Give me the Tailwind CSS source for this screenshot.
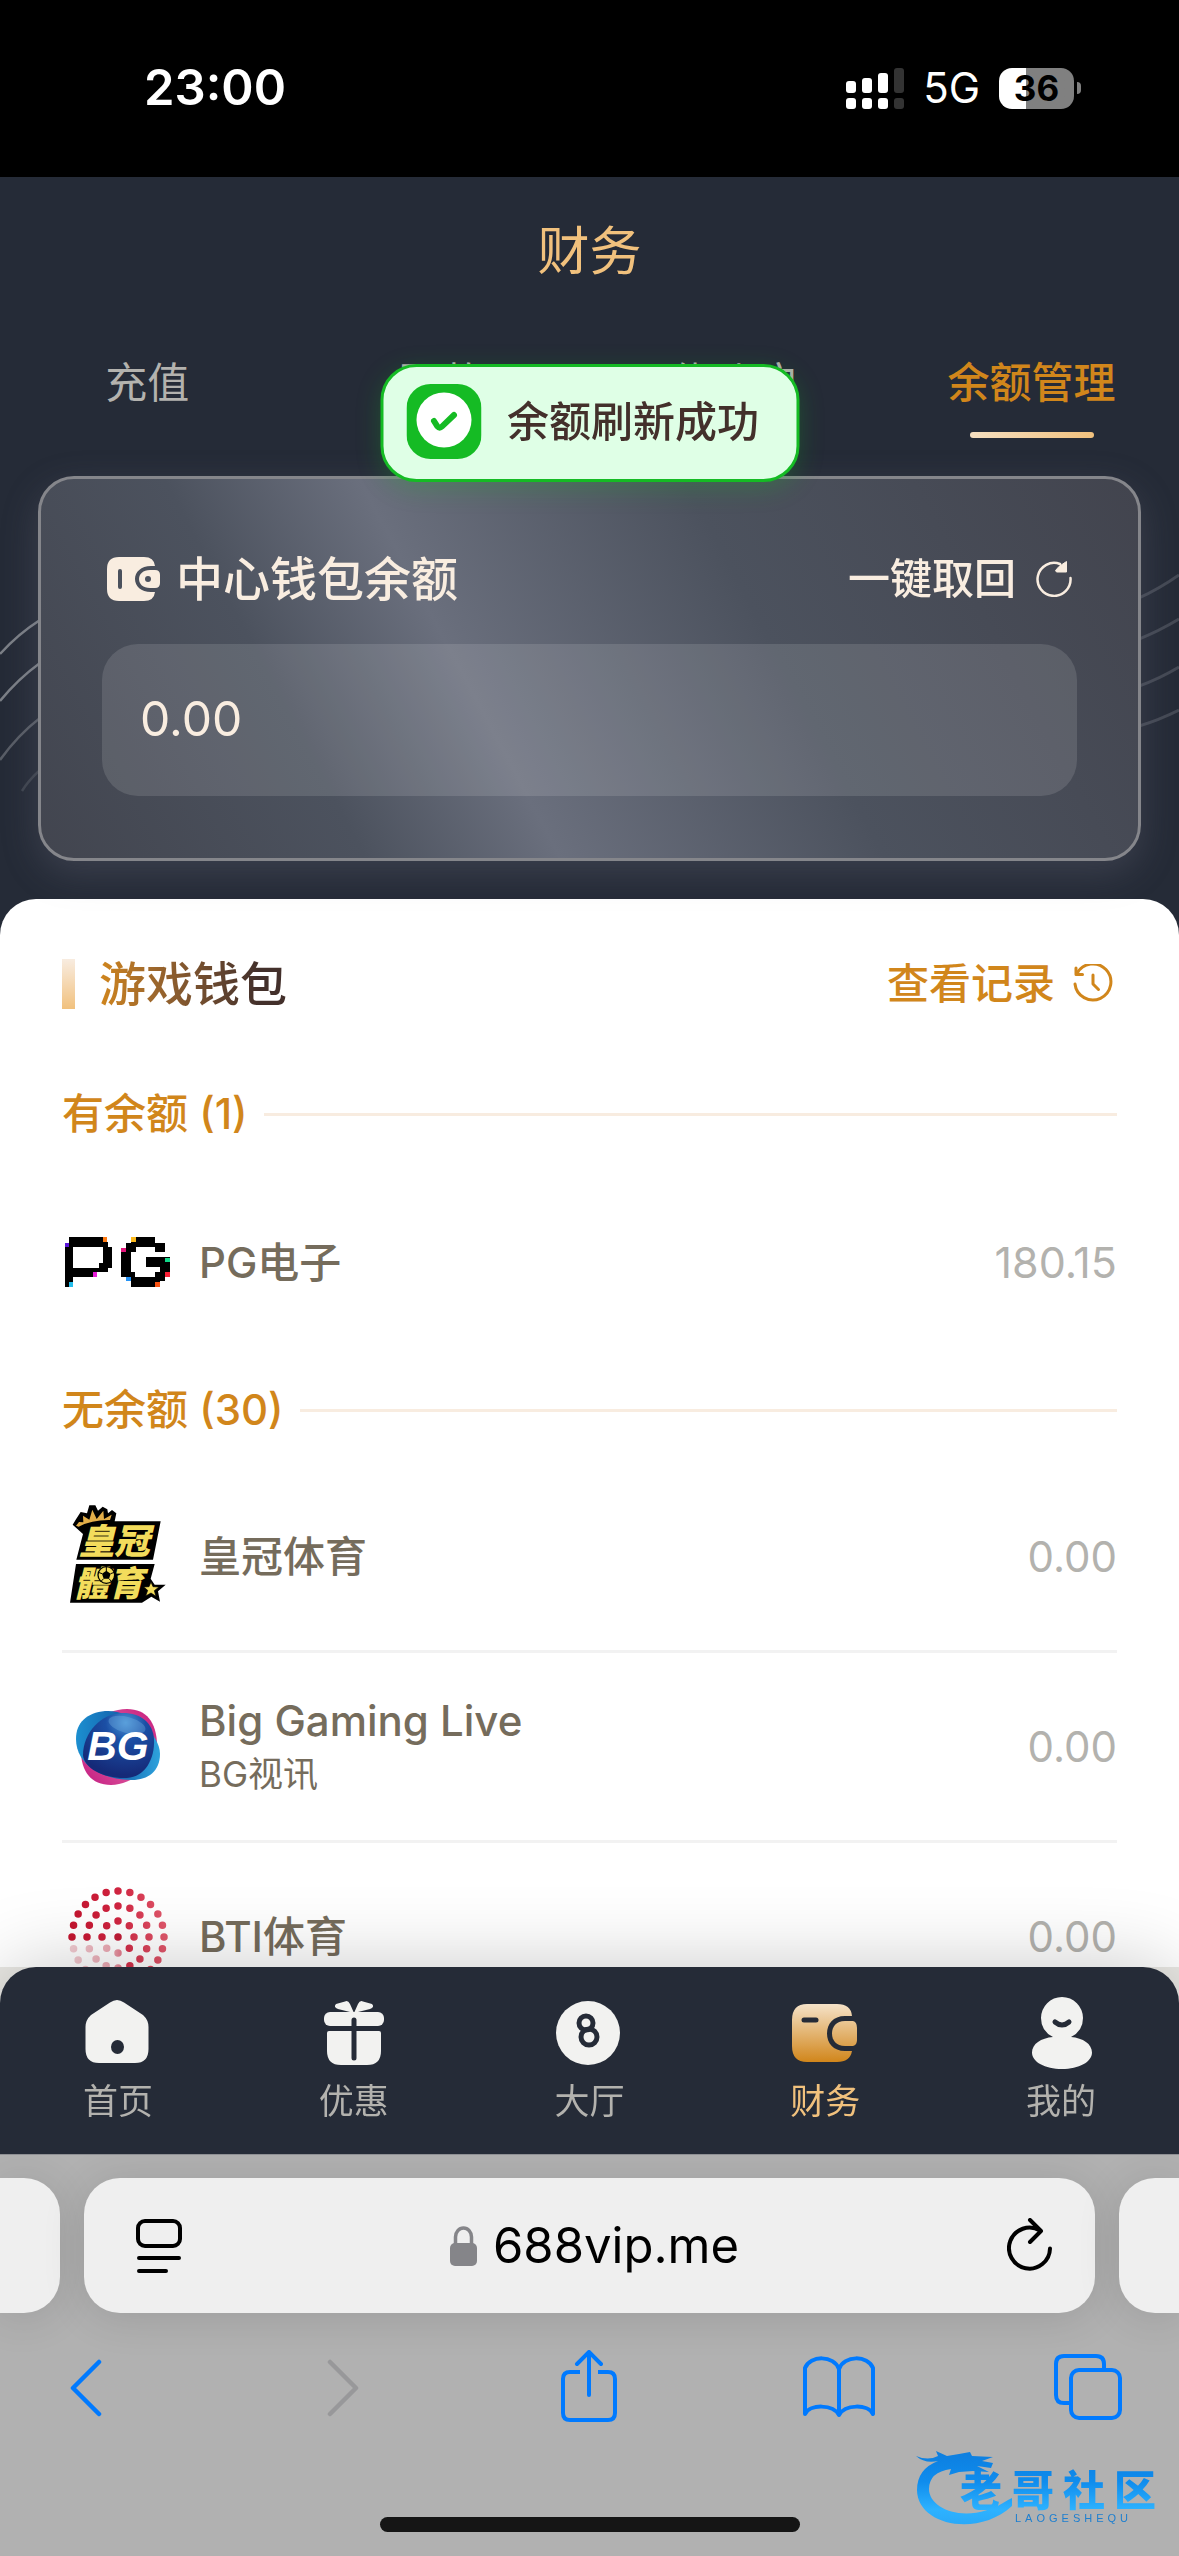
<!DOCTYPE html>
<html lang="zh-CN">
<head>
<meta charset="utf-8">
<meta name="viewport" content="width=device-width, initial-scale=1">
<title>财务</title>
<script src="https://cdn.jsdelivr.net/npm/@tailwindcss/browser@4"></script>
</head>
<body class="flex h-screen flex-col overflow-hidden bg-[#252b37] font-['Inter','Noto_Sans_CJK_SC',sans-serif]">

<!-- Status bar -->
<div class="flex h-[177px] shrink-0 items-start justify-between bg-black pt-[58px] pr-[98px] pl-36 text-white">
  <time class="text-[49px] leading-[60px] font-semibold">23:00</time>
  <div class="flex h-[60px] items-center gap-[19px]">
    <svg class="h-[41px] w-[58px]" viewBox="0 0 58 41" fill="#fff" aria-hidden="true">
      <rect x="0" y="13" width="10" height="12" rx="3"/><rect x="16" y="10" width="10" height="15" rx="3"/><rect x="32" y="5" width="10" height="20" rx="3"/><rect x="48" y="0" width="10" height="25" rx="3" fill="#333"/>
      <rect x="0" y="30" width="10" height="11" rx="3"/><rect x="16" y="30" width="10" height="11" rx="3"/><rect x="32" y="30" width="10" height="11" rx="3"/><rect x="48" y="30" width="10" height="11" rx="3" fill="#333"/>
    </svg>
    <span class="text-[42px] leading-[60px]">5G</span>
    <div class="flex items-center gap-[3px]">
      <span class="flex h-[41px] w-[75px] items-center justify-center rounded-[13px] bg-linear-to-r from-white from-36% to-[#808080] to-36% text-[35px] font-bold text-black">36</span>
      <span class="h-3 w-1 rounded-r-full bg-[#808080]"></span>
    </div>
  </div>
</div>

<!-- Page header, tabs and wallet card -->
<header class="relative shrink-0 pb-[38px]">
  <svg class="absolute top-[390px] left-0 h-[230px] w-10" viewBox="0 0 40 230" fill="none" stroke="#7b7f86" stroke-width="2.500" aria-hidden="true">
    <path d="M0 87Q18 67 40 53"/><path d="M0 134Q18 112 40 96"/><path d="M0 193Q18 168 40 151" opacity=".6"/><path d="M22 224Q28 214 40 203" opacity=".3"/>
  </svg>
  <svg class="absolute top-[390px] right-0 h-[230px] w-10" viewBox="0 0 40 230" fill="none" stroke="#444954" stroke-width="3" aria-hidden="true">
    <path d="M0 31Q20 22 40 8"/><path d="M0 72Q20 64 40 52"/><path d="M0 119Q20 112 40 100"/><path d="M0 159Q20 153 40 143"/>
  </svg>
  <h1 class="text-center text-[52px] leading-[150px] text-[#f1c17d]">财务</h1>
  <nav class="grid grid-cols-4 text-[42px] leading-[60px] text-[#b3b2ae]" aria-label="财务分类">
    <a href="#" class="flex h-[111px] flex-col items-center pt-[26px]">充值</a>
    <a href="#" class="flex h-[111px] flex-col items-center pt-[26px]">取款</a>
    <a href="#" class="flex h-[111px] flex-col items-center pt-[26px]">绑账户</a>
    <a href="#" class="flex h-[111px] flex-col items-center justify-between pt-[26px] font-medium text-[#d1861b]" aria-current="page">余额管理<span class="h-1.5 w-[124px] rounded-full bg-linear-to-r from-[#f5dfc0] to-[#f1c17d]"></span></a>
  </nav>

  <section class="relative mx-[38px] mt-[38px] rounded-[36px] border-3 border-[#85868b] bg-[linear-gradient(62deg,#42454f_0%,#4c525e_25%,#6a6f7d_40%,#4c525e_65%,#42444e_100%)] px-[61px] pt-[70px] pb-[62px] text-[#f9ede0] shadow-[0_12px_36px_rgba(120,120,135,0.28)]">
    <div class="flex h-[60px] items-center justify-between px-[5px]">
      <h2 class="flex items-center gap-4 text-[47px] leading-[60px] font-medium">
        <svg class="h-11 w-[53px]" viewBox="0 0 53 44" fill="none" aria-hidden="true">
          <path d="M12 0H37Q47 0 48 9H44C34 9 28 15 28 22S34 35 44 35H48Q47 44 37 44H12Q0 44 0 32V12Q0 0 12 0Z" fill="#f9ede0"/>
          <path d="M43 13H48Q53 13 53 18V26Q53 31 48 31H43C36 31 32 27 32 22S36 13 43 13Z" fill="#f9ede0"/>
          <circle cx="41" cy="22" r="3" fill="#4b515d"/><path d="M13 14V30" stroke="#4b515d" stroke-width="4" stroke-linecap="round"/>
        </svg>
        中心钱包余额
      </h2>
      <button type="button" class="flex items-center gap-5 text-[42px] leading-[60px] font-medium">
        一键取回
        <svg class="size-9" viewBox="0 0 36 36" fill="none" aria-hidden="true">
          <path d="M34.500 17A16.500 16.500 0 1 1 24 3" stroke="#f9ede0" stroke-width="2.500" stroke-linecap="round"/>
          <path d="M30.500 0.500V11H20.500L19.500 9.500L23 5.500Z" fill="#f9ede0" stroke="#f9ede0" stroke-linejoin="round"/>
        </svg>
      </button>
    </div>
    <p class="mt-[35px] flex h-[152px] items-center rounded-[36px] bg-white/12 px-[38px] pb-[3px] text-[48px]">0.00</p>
  </section>

  <!-- Toast -->
  <div role="status" class="absolute top-[187px] left-1/2 flex h-[118px] -translate-x-1/2 items-center gap-[26px] rounded-[36px] border-3 border-[#15bb24] bg-[#dfffe6] pr-[37px] pb-[3px] pl-[23px] text-[42px] font-medium whitespace-nowrap text-[#43302b] shadow-[0_6px_24px_rgba(21,187,36,0.25)]">
    <svg class="size-[75px]" viewBox="0 0 75 75" fill="none" aria-hidden="true">
      <rect width="75" height="75" rx="24" fill="#15bb24"/><circle cx="37.500" cy="36" r="27.500" fill="#fff"/>
      <path d="M27.500 37L31 42.500Q33 45 35.500 42.500L47.500 31" stroke="#15bb24" stroke-width="6" stroke-linecap="round"/>
    </svg>
    余额刷新成功
  </div>
</header>

<!-- Game wallets -->
<main class="min-h-0 flex-1 overflow-y-auto rounded-t-[36px] bg-white px-[62px] pt-[60px] text-[42px] [scrollbar-width:none]">
  <div class="flex h-[50px] items-center justify-between">
    <div class="flex items-center gap-6">
      <span class="h-[50px] w-[13px] bg-linear-to-b from-[#f8ece0] to-[#f1c17d]"></span>
      <h2 class="bg-linear-to-r from-[#d1861b] to-[#43302b] to-85% bg-clip-text text-[47px] leading-[60px] font-medium text-transparent">游戏钱包</h2>
    </div>
    <a href="#" class="flex items-center gap-[18px] pr-1 leading-[60px] font-medium text-[#d1861b]">
      查看记录
      <svg class="size-10" viewBox="0 0 40 40" fill="none" stroke="#d1861b" stroke-width="3" stroke-linecap="round" stroke-linejoin="round" aria-hidden="true">
        <path d="M4 9.500A18 18 0 1 1 2 20"/><path d="M3 4V10.500H9.500"/><path d="M20 11V20L25.500 25.500"/>
      </svg>
    </a>
  </div>

  <h3 class="mt-[75px] flex items-center gap-4 leading-[60px] font-medium text-[#d1861b]">有余额 (1)<span class="h-[3px] flex-1 bg-[#f8ece0]"></span></h3>
  <ul class="my-[23px] text-[#756c5c]">
    <li class="flex h-[190px] items-center gap-[26px]">
      <span class="flex w-[111px] justify-center">
        <svg class="h-[50px] w-[105px]" viewBox="76 108 313 148" shape-rendering="crispEdges" role="img" aria-label="PG">
          <path d="M88 108H200V122H205V137H217V199H204V213H172V227H101V256H76V124H88ZM101 137V199H176V185H188V137Z" fill-rule="evenodd"/>
          <path d="M272 108H345V124H373V152H345V137H287V153H272V213H284V228H345V213H360V196H316V168H388V226H373V240H358V256H272V240H258V226H244V139H258V124H272Z"/>
          <path d="M76 124h13v13H76z" fill="#5a15d8"/><path d="M188 108h12v14h-12z" fill="#ff7a12"/><path d="M159 213h13v14h-13z" fill="#e51cd6"/><path d="M88 243h12v13H88z" fill="#24bdeb"/>
          <path d="M244 139h14v14h-14z" fill="#e3167c"/><path d="M273 108h14v14h-14z" fill="#fbb91c"/><path d="M374 169h14v14h-14z" fill="#12d98a"/><path d="M374 212h14v14h-14z" fill="#fa1f35"/><path d="M259 226h14v14h-14z" fill="#2492f5"/><path d="M345 242h13v14h-13z" fill="#fa5312"/>
        </svg>
      </span>
      <span class="flex-1 font-medium">PG电子</span>
      <span class="text-[43px] text-[#b3b2ae]">180.15</span>
    </li>
  </ul>

  <h3 class="flex items-center gap-4 leading-[60px] font-medium text-[#d1861b]">无余额 (30)<span class="h-[3px] flex-1 bg-[#f8ece0]"></span></h3>
  <ul class="mt-[23px] text-[#756c5c]">
    <li class="flex h-[190px] items-center gap-[26px] border-b-3 border-[#f2f2f2]">
      <span class="flex w-[111px] justify-center pb-1.5">
        <svg class="h-[99px] w-24" viewBox="94 910 288 297" role="img" aria-label="皇冠體育">
          <path d="M133 1000L102 972L112 956L126 934L145 938L152 914L170 914L178 930L192 918L206 926L208 938L220 928L233 938L228 962H366L343 1077H113Z"/>
          <path d="M112 1090H348L336 1134L348 1152H381L358 1172L364 1203L338 1188L310 1206H94Z"/>
          <path d="M112 975L121 964L134 965L133 945L152 957L161 927L174 955L194 930L196 955L219 942L214 958Q160 957 120 978Z" fill="#e3ae48"/>
          <g fill="#f3dc5c" font-family="'Noto Sans CJK TC',sans-serif" font-weight="900" font-style="italic">
            <text x="121" y="1059" font-size="106">皇冠</text>
            <text x="106" y="1187" font-size="104">體育</text>
          </g>
          <circle cx="203" cy="1123" r="25" fill="#f3dc5c" stroke="#000" stroke-width="4"/>
          <path d="M203 1110l13 9-5 15h-16l-5-15z"/><path d="M203 1098v14M216 1119l11-4M211 1134l8 9M195 1134l-9 9M190 1119l-11-4" stroke="#000" stroke-width="3"/>
          <path d="M337 1144L343 1158L361 1159L347 1170L352 1187L337 1177L321 1186L327 1169L315 1159L331 1158Z" fill="#f3dc5c" stroke="#000" stroke-width="2"/>
        </svg>
      </span>
      <span class="flex-1 font-medium">皇冠体育</span>
      <span class="text-[#b3b2ae]">0.00</span>
    </li>
    <li class="flex h-[190px] items-center gap-[26px] border-b-3 border-[#f2f2f2]">
      <span class="flex w-[111px] justify-center">
        <svg class="h-[76px] w-[86px]" viewBox="0 0 86 76" role="img" aria-label="BG">
          <defs>
            <radialGradient id="bgBall" cx=".6" cy=".15" r=".8"><stop offset="0" stop-color="#4a95d6"/><stop offset=".35" stop-color="#1b4fa5"/><stop offset="1" stop-color="#152a78"/></radialGradient>
            <linearGradient id="bgBlue" x1="0" x2="1"><stop offset="0" stop-color="#1c8fd0"/><stop offset=".5" stop-color="#1465ae"/><stop offset="1" stop-color="#2ea3dd"/></linearGradient>
            <linearGradient id="bgPink" x1="0" y1="1" x2="1" y2="0"><stop offset="0" stop-color="#c21880"/><stop offset=".5" stop-color="#e0609f"/><stop offset="1" stop-color="#c5187c"/></linearGradient>
          </defs>
          <path d="M52 0C72 0 81 14 82 34C82 56 57 76 36 76C16 76 6 62 6 42C8 20 27 0 52 0Z" fill="url(#bgPink)"/>
          <path d="M30 2C55 0 85 24 85 45C85 62 73 71 57 71C28 71 1 56 1 30C1 13 12 4 30 2Z" fill="url(#bgBlue)"/>
          <path d="M48 4C66 4 78 14 79 30C80 50 70 68 52 69C30 70 9 60 8 46C8 24 26 4 48 4Z" fill="url(#bgBall)"/>
          <ellipse cx="52" cy="16" rx="19" ry="8" fill="#79b4e5" opacity=".35" transform="rotate(15 52 16)"/>
          <text x="43" y="51" text-anchor="middle" font-family="'Liberation Sans',sans-serif" font-size="41" font-weight="700" font-style="italic" fill="#fff">BG</text>
        </svg>
      </span>
      <span class="flex flex-1 flex-col font-medium"><span class="leading-[54px]">Big Gaming Live</span><span class="text-[35px] leading-[52px] font-normal">BG视讯</span></span>
      <span class="text-[#b3b2ae]">0.00</span>
    </li>
    <li class="flex h-[190px] items-center gap-[26px] border-b-3 border-[#f2f2f2]">
      <span class="flex w-[111px] justify-center">
        <svg class="size-[102px]" viewBox="-51 -51 102 102" fill="none" role="img" aria-label="BTI">
          <defs>
            <linearGradient id="btiRed" gradientUnits="userSpaceOnUse" x1="-46" y1="0" x2="46" y2="0"><stop offset="0" stop-color="#c4152f"/><stop offset=".5" stop-color="#d02440"/><stop offset="1" stop-color="#e0566a"/></linearGradient>
            <linearGradient id="btiFade" gradientUnits="userSpaceOnUse" x1="-46" y1="0" x2="12" y2="0"><stop offset="0" stop-color="#fff" stop-opacity=".78"/><stop offset=".7" stop-color="#fff" stop-opacity=".6"/><stop offset="1" stop-color="#fff" stop-opacity=".2"/></linearGradient>
          </defs>
          <g stroke="url(#btiRed)" stroke-width="7.500" stroke-linecap="round">
            <circle r="46" pathLength="24" stroke-dasharray="0 1"/>
            <circle r="31" pathLength="16" stroke-dasharray="0 1"/>
            <circle r="16" pathLength="8" stroke-dasharray="0 1"/>
          </g>
          <circle r="3.750" fill="#c01c36"/>
          <path d="M-51 6H6V51H-51Z" fill="url(#btiFade)"/>
        </svg>
      </span>
      <span class="flex-1 font-medium">BTI体育</span>
      <span class="text-[#b3b2ae]">0.00</span>
    </li>
  </ul>
</main>

<!-- App navigation -->
<div class="shrink-0 bg-[#e9e8e4]">
  <nav class="relative grid h-[187px] grid-cols-5 rounded-t-[36px] bg-[#252b37] pt-7 text-[35px] leading-[50px] text-[#b3b2ae] shadow-[0_0_80px_rgba(0,0,0,0.22)]" aria-label="主导航">
    <a href="#" class="flex flex-col items-center gap-[5px]">
      <svg class="size-[76px]" viewBox="0 0 76 76" aria-hidden="true"><path d="M30 7.500Q37 2.500 44 7.500L63 20Q68.500 25 68.500 32V54Q68.500 68 55 68H19Q5.500 68 5.500 54V32Q5.500 25 11 20Z" fill="#f2f2f0"/><ellipse cx="37.500" cy="52" rx="6.500" ry="7" fill="#252b37"/></svg>
      首页
    </a>
    <a href="#" class="flex flex-col items-center gap-[5px]">
      <svg class="size-[76px]" viewBox="0 0 76 76" fill="#f2f2f0" aria-hidden="true"><path d="M38 18L22 14Q17 12 20 9L29 6.500Q32 5 34 9ZM38 18L54 14Q59 12 56 9L47 6.500Q44 5 42 9Z"/><rect x="8" y="17" width="60" height="14" rx="6"/><path d="M11 38Q11 36 13 36H63Q65 36 65 38V56Q65 70 51 70H25Q11 70 11 56Z"/><path d="M38 25V63" stroke="#252b37" stroke-width="5" stroke-linecap="round"/></svg>
      优惠
    </a>
    <a href="#" class="flex flex-col items-center gap-[5px]">
      <svg class="size-[76px]" viewBox="0 0 76 76" aria-hidden="true"><circle cx="37" cy="38" r="32" fill="#f2f2f0"/><g fill="none" stroke="#252b37" stroke-width="5"><circle cx="35" cy="28" r="7"/><circle cx="38" cy="42" r="8"/></g></svg>
      大厅
    </a>
    <a href="#" class="flex flex-col items-center gap-[5px] text-[#f1c17d]" aria-current="page">
      <svg class="size-[76px]" viewBox="0 0 76 76" aria-hidden="true">
        <defs><linearGradient id="navGold" gradientUnits="userSpaceOnUse" x1="0" y1="9" x2="0" y2="67"><stop offset="0" stop-color="#f5e2c8"/><stop offset="1" stop-color="#d1861b"/></linearGradient></defs>
        <path d="M20 9H50Q64 9 65 21H58C46 21 40 29 40 38.500S46 56 58 56H65Q63 67 50 67H20Q5 67 5 51V25Q5 9 20 9Z" fill="url(#navGold)"/>
        <path d="M58 26H66Q70 27 70 33V45Q70 50 66 51H58C49 51 45 45 45 38.500S49 26 58 26Z" fill="url(#navGold)"/>
        <path d="M17 25H29" stroke="#252b37" stroke-width="5" stroke-linecap="round"/>
      </svg>
      财务
    </a>
    <a href="#" class="flex flex-col items-center gap-[5px]">
      <svg class="size-[76px]" viewBox="0 0 76 76" aria-hidden="true"><path d="M39 2A21 21 0 0 1 60 23Q60 36 48 42C60 43 69 49 69 57.500C69 67 56 74 39 74S9 67 9 57.500C9 49 18 43 30 42Q18 36 18 23A21 21 0 0 1 39 2Z" fill="#f2f2f0"/><path d="M32 27Q39 33 46 27" fill="none" stroke="#252b37" stroke-width="5" stroke-linecap="round"/></svg>
      我的
    </a>
  </nav>
</div>

<!-- Browser chrome -->
<footer class="relative flex h-[402px] shrink-0 flex-col items-center overflow-hidden border-t border-[#8e8f93] bg-[#b1b1b1]">
  <div class="mt-[23px] flex h-[135px] w-full items-stretch gap-6 text-black">
    <span class="w-[60px] rounded-r-[36px] bg-[#efefef] shadow-[0_4px_44px_rgba(0,0,0,0.12)]"></span>
    <div class="flex flex-1 items-center justify-between rounded-[36px] bg-[#efefef] pr-[42px] pl-[52px] shadow-[0_4px_44px_rgba(0,0,0,0.12)]">
      <button type="button" aria-label="页面设置"><svg class="h-14 w-[46px]" viewBox="0 0 46 56" fill="none" stroke="#000" stroke-width="4" stroke-linecap="round"><rect x="2" y="3" width="42" height="25" rx="7"/><path d="M3 40H43M3 53H30"/></svg></button>
      <button type="button" class="flex items-center gap-4 text-[49px] leading-[60px]"><svg class="h-10 w-[27px]" viewBox="0 0 27 40" fill="#858589" aria-hidden="true"><path d="M5.500 18V11A8 9 0 0 1 21.500 11V18" fill="none" stroke="#858589" stroke-width="3.500"/><rect y="17" width="27" height="23" rx="5"/></svg>688vip.me</button>
      <button type="button" aria-label="重新载入"><svg class="h-14 w-[46px]" viewBox="0 0 46 56" fill="none" stroke="#000" stroke-width="4" stroke-linecap="round" stroke-linejoin="round"><path d="M43 30.500A20.500 20.500 0 1 1 33 12.500"/><path d="M23 2L34 13L23 24"/></svg></button>
    </div>
    <span class="w-[60px] rounded-l-[36px] bg-[#efefef] shadow-[0_4px_44px_rgba(0,0,0,0.12)]"></span>
  </div>
  <div class="mt-9 flex h-[76px] w-full items-center justify-between pr-14 pl-[66px] text-[#007aff]">
    <button type="button" aria-label="后退"><svg class="h-[60px] w-10" viewBox="0 0 40 60" fill="none" stroke="currentColor" stroke-width="4.500" stroke-linecap="round" stroke-linejoin="round"><path d="M33 5L7 31L33 57"/></svg></button>
    <button type="button" class="pl-10 text-[#98989a]" aria-label="前进" disabled><svg class="h-[60px] w-10" viewBox="0 0 40 60" fill="none" stroke="currentColor" stroke-width="4.500" stroke-linecap="round" stroke-linejoin="round"><path d="M7 5L33 31L7 57"/></svg></button>
    <button type="button" class="pl-[18px]" aria-label="共享"><svg class="h-[74px] w-[60px]" viewBox="0 0 60 74" fill="none" stroke="currentColor" stroke-width="4" stroke-linecap="round" stroke-linejoin="round"><path d="M21 22H11Q4 22 4 29V63Q4 70 11 70H49Q56 70 56 63V29Q56 22 49 22H39" stroke-linecap="butt"/><path d="M30 45V2M18 14L30 2L42 14"/></svg></button>
    <button type="button" class="pl-[6px]" aria-label="书签"><svg class="h-16 w-[74px]" viewBox="0 0 74 64" fill="none" stroke="currentColor" stroke-width="4" stroke-linejoin="round"><path d="M37 14C32 0 8 0 3 13V59C8 49 31 49 37 60C43 49 66 49 71 59V13C66 0 42 0 37 14ZM37 14V60"/></svg></button>
    <button type="button" aria-label="标签页"><svg class="h-[68px] w-[70px]" viewBox="0 0 70 68" fill="none" stroke="currentColor" stroke-width="4" stroke-linejoin="round"><path d="M18 50H11Q3 50 3 42V11Q3 3 11 3H43Q51 3 51 11V17"/><rect x="18" y="17" width="49" height="48" rx="8"/></svg></button>
  </div>
  <span class="mt-[92px] h-[15px] w-[420px] rounded-full bg-[#151515]"></span>

  <!-- Watermark -->
  <svg class="absolute right-[18px] bottom-7 h-[80px] w-[246px]" viewBox="0 0 246 80" role="img" aria-label="老哥社区 LAOGESHEQU">
    <defs><linearGradient id="wm" gradientUnits="userSpaceOnUse" x1="0" y1="5" x2="0" y2="76"><stop offset="0" stop-color="#0d7fe0"/><stop offset=".4" stop-color="#0f8ced"/><stop offset=".8" stop-color="#2db2ff"/><stop offset="1" stop-color="#2aa9f8"/></linearGradient></defs>
    <g fill="url(#wm)">
      <path d="M1 8Q13 13 23 8L21 3L32 8L44 6L55 4L57 8L78 9L67 13L78 15L76 20L62 18L74 24L58 23L44 24L34 27L36 21Q14 24 14 41C14 62 54 78 93 52L97 50L97 58C62 90 2 77 2 42Q2 21 23 13Q10 16 1 8Z"/>
      <text y="58" font-family="'Noto Sans CJK SC',sans-serif" font-weight="900" font-size="42"><tspan x="45">老</tspan><tspan x="97">哥</tspan><tspan x="148">社</tspan><tspan x="199">区</tspan></text>
      <text y="74" x="100" font-family="'Liberation Sans',sans-serif" font-size="11" letter-spacing="4" fill="#1d7fd0">LAOGESHEQU</text>
    </g>
  </svg>
</footer>
</body>
</html>
